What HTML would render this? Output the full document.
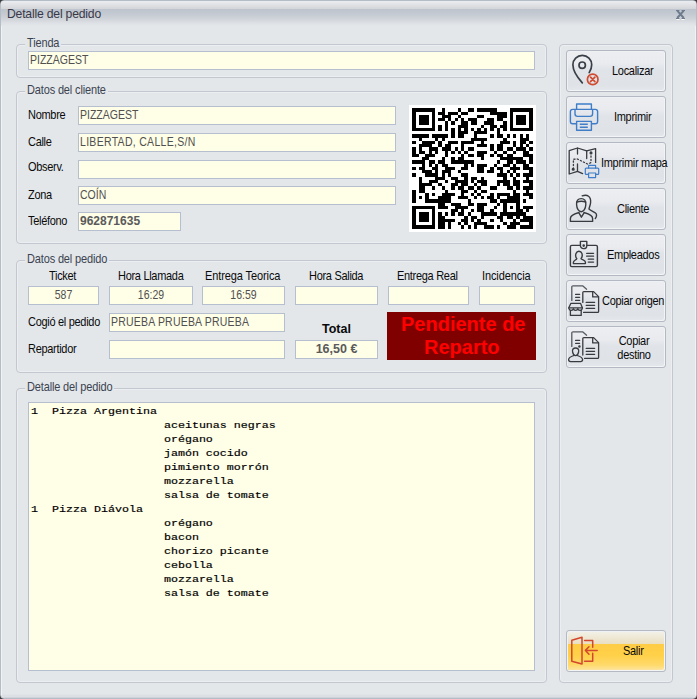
<!DOCTYPE html>
<html><head><meta charset="utf-8">
<style>
*{margin:0;padding:0;box-sizing:border-box}
html,body{width:697px;height:699px;overflow:hidden;background:#3a3a3a}
body{position:relative;font-family:"Liberation Sans",sans-serif;font-size:11px;color:#111}
.a{position:absolute}
#win{position:absolute;left:0;top:0;width:697px;height:699px;background:linear-gradient(#e3e7ea 693px,#e6e8ea 693px,#dcdfe3 694px,#dcdfe3 696px,#d0d4da 696px);border:1px solid #b4bcc6;border-radius:4px 4px 4px 4px;box-shadow:inset 1px 0 #f1f2f4,inset -1px 0 #f1f2f4}
#title{position:absolute;left:1px;top:1px;width:695px;height:25px;border-radius:3px 3px 0 0;
 background:linear-gradient(#ebecef 0px,#e6e7ea 2px,#d3d5d9 8px,#bdc4cd 8px,#c4cad2 13px,#d0d4da 18px,#dde0e4 22px,#e3e7ea 25px)}
.ttl{position:absolute;left:6px;top:7px;font-size:12.2px;letter-spacing:-0.2px;line-height:12px;color:#3a3848;white-space:nowrap}
.gb{position:absolute;border:1px solid #c3c8d0;border-radius:4px;box-shadow:inset 0 0 0 1px #eceef1}
.cap{position:absolute;font-size:11px;letter-spacing:-0.15px;transform:scaleY(1.08);transform-origin:0 10px;color:#3b4350;background:#e3e7ea;padding:0 2px 0 2px;white-space:nowrap;line-height:12px}
.lb{position:absolute;font-size:11px;letter-spacing:-0.3px;transform:scaleY(1.08);transform-origin:0 10px;color:#0a0a0a;white-space:nowrap;line-height:12px}
.in{position:absolute;background:#fffee7;border:1px solid #b5bfd0;height:19px}
.tx{position:absolute;font-size:10.5px;color:#505050;white-space:nowrap;line-height:12px;transform:scaleY(1.15);transform-origin:0 10px}
.btn{position:absolute;left:566px;width:100px;height:42px;border:1px solid #b3b8c2;border-radius:3px;box-shadow:inset -1px -1px #f3f4f6,inset 1px 1px #f0f1f4;
 background:linear-gradient(#eceef1 0px,#e9ebef 12px,#e0e3e8 19px,#dfe2e7 34px,#e4e7eb 40px)}
.bt{position:absolute;font-size:11px;letter-spacing:-0.3px;transform:scaleY(1.08);transform-origin:0 10px;color:#0a0a0a;white-space:nowrap;line-height:12px}
svg{position:absolute;overflow:visible}
.memo div{position:absolute;left:31px;white-space:pre;font-family:"Liberation Mono",monospace;font-size:11.667px;line-height:14px;height:14px;color:#000;-webkit-text-stroke:0.2px #000;transform:scaleY(0.85);transform-origin:0 10px}
</style></head><body>
<div id="win"></div>
<div id="title"><div class="ttl">Detalle del pedido</div></div>
<svg style="left:675px;top:9px" width="11" height="11" viewBox="0 0 11 11">
 <path d="M1.5 10.5h3M6.5 10.5h3" stroke="#fff" stroke-width="1" opacity=".9"/>
 <path d="M2.2 1.6L8.8 9M8.8 1.6L2.2 9" stroke="#6f7c8d" stroke-width="2"/>
 <path d="M1 1.5h3.4M6.6 1.5h3.4M1 9.5h3.4M6.6 9.5h3.4" stroke="#6f7c8d" stroke-width="1.1"/>
</svg>

<!-- Tienda -->
<div class="gb" style="left:16px;top:44px;width:531px;height:34px"></div>
<div class="cap" style="left:25px;top:37px">Tienda</div>
<div class="in" style="left:28px;top:51px;width:507px"></div>
<div class="tx" style="left:30px;top:54px">PIZZAGEST</div>

<!-- Datos del cliente -->
<div class="gb" style="left:16px;top:91px;width:531px;height:153px"></div>
<div class="cap" style="left:25px;top:84px">Datos del cliente</div>
<div class="lb" style="left:28px;top:109px">Nombre</div>
<div class="in" style="left:78px;top:106px;width:318px"></div>
<div class="tx" style="left:80px;top:109px">PIZZAGEST</div>
<div class="lb" style="left:28px;top:136px">Calle</div>
<div class="in" style="left:78px;top:133px;width:318px"></div>
<div class="tx" style="left:80px;top:136px;letter-spacing:0.3px">LIBERTAD, CALLE,S/N</div>
<div class="lb" style="left:28px;top:161px">Observ.</div>
<div class="in" style="left:78px;top:160px;width:318px"></div>
<div class="lb" style="left:28px;top:189px">Zona</div>
<div class="in" style="left:78px;top:186px;width:318px"></div>
<div class="tx" style="left:80px;top:189px">COÍN</div>
<div class="lb" style="left:28px;top:215px">Teléfono</div>
<div class="in" style="left:78px;top:212px;width:103px"></div>
<div class="tx" style="left:80px;top:215px;font-weight:bold;font-size:12px;color:#5a5a5a;transform:none">962871635</div>
<div class="a" style="left:409px;top:105px;width:127px;height:127px;background:#fff"></div>
<svg id="qr" style="left:412px;top:108px" width="121" height="121" viewBox="0 0 121 121" shape-rendering="crispEdges"><path d="M0 0H23V4H0zM30 0H33V4H30zM46 0H49V4H46zM56 0H62V4H56zM65 0H85V4H65zM98 0H121V4H98zM0 4H4V7H0zM20 4H23V7H20zM26 4H33V7H26zM36 4H46V7H36zM49 4H56V7H49zM78 4H95V7H78zM98 4H101V7H98zM117 4H121V7H117zM0 7H4V10H0zM7 7H17V10H7zM20 7H23V10H20zM30 7H39V10H30zM46 7H49V10H46zM65 7H72V10H65zM85 7H95V10H85zM98 7H101V10H98zM104 7H114V10H104zM117 7H121V10H117zM0 10H4V13H0zM7 10H17V13H7zM20 10H23V13H20zM26 10H33V13H26zM36 10H39V13H36zM43 10H46V13H43zM49 10H52V13H49zM56 10H65V13H56zM75 10H82V13H75zM85 10H91V13H85zM98 10H101V13H98zM104 10H114V13H104zM117 10H121V13H117zM0 13H4V17H0zM7 13H17V17H7zM20 13H23V17H20zM33 13H36V17H33zM39 13H43V17H39zM49 13H56V17H49zM59 13H65V17H59zM72 13H82V17H72zM91 13H95V17H91zM98 13H101V17H98zM104 13H114V17H104zM117 13H121V17H117zM0 17H4V20H0zM20 17H23V20H20zM26 17H30V20H26zM33 17H36V20H33zM46 17H56V20H46zM69 17H72V20H69zM78 17H85V20H78zM88 17H95V20H88zM98 17H101V20H98zM117 17H121V20H117zM0 20H23V23H0zM26 20H30V23H26zM33 20H36V23H33zM39 20H43V23H39zM46 20H49V23H46zM52 20H56V23H52zM59 20H62V23H59zM65 20H69V23H65zM72 20H75V23H72zM78 20H82V23H78zM85 20H88V23H85zM91 20H95V23H91zM98 20H121V23H98zM39 23H43V26H39zM46 23H56V26H46zM62 23H75V26H62zM85 23H88V26H85zM0 26H17V30H0zM20 26H36V30H20zM39 26H43V30H39zM46 26H52V30H46zM62 26H65V30H62zM78 26H82V30H78zM85 26H91V30H85zM95 26H98V30H95zM101 26H104V30H101zM108 26H111V30H108zM114 26H117V30H114zM7 30H10V33H7zM23 30H26V33H23zM30 30H33V33H30zM59 30H75V33H59zM91 30H95V33H91zM108 30H117V33H108zM0 33H4V36H0zM10 33H23V36H10zM26 33H30V36H26zM36 33H46V36H36zM49 33H62V36H49zM69 33H72V36H69zM88 33H98V36H88zM101 33H104V36H101zM108 33H114V36H108zM117 33H121V36H117zM7 36H20V39H7zM26 36H30V39H26zM33 36H39V39H33zM49 36H52V39H49zM65 36H75V39H65zM78 36H82V39H78zM85 36H91V39H85zM101 36H104V39H101zM108 36H111V39H108zM114 36H117V39H114zM0 39H4V43H0zM7 39H10V43H7zM17 39H26V43H17zM30 39H39V43H30zM43 39H46V43H43zM49 39H52V43H49zM56 39H62V43H56zM78 39H82V43H78zM85 39H91V43H85zM95 39H101V43H95zM104 39H114V43H104zM117 39H121V43H117zM0 43H4V46H0zM7 43H13V46H7zM17 43H20V46H17zM23 43H26V46H23zM33 43H36V46H33zM39 43H43V46H39zM46 43H49V46H46zM52 43H56V46H52zM65 43H75V46H65zM82 43H85V46H82zM91 43H95V46H91zM101 43H104V46H101zM111 43H117V46H111zM0 46H7V49H0zM13 46H23V49H13zM33 46H36V49H33zM49 46H52V49H49zM56 46H62V49H56zM65 46H72V49H65zM78 46H82V49H78zM85 46H91V49H85zM95 46H101V49H95zM111 46H121V49H111zM10 49H17V52H10zM30 49H33V52H30zM39 49H43V52H39zM46 49H52V52H46zM69 49H72V52H69zM88 49H111V52H88zM117 49H121V52H117zM0 52H13V56H0zM17 52H23V56H17zM26 52H33V56H26zM39 52H62V56H39zM85 52H88V56H85zM95 52H101V56H95zM104 52H114V56H104zM117 52H121V56H117zM10 56H13V59H10zM17 56H20V59H17zM23 56H26V59H23zM30 56H36V59H30zM52 56H56V59H52zM59 56H62V59H59zM65 56H75V59H65zM82 56H85V59H82zM91 56H98V59H91zM101 56H104V59H101zM111 56H117V59H111zM0 59H4V62H0zM7 59H13V62H7zM20 59H26V62H20zM33 59H43V62H33zM49 59H56V62H49zM65 59H72V62H65zM78 59H82V62H78zM85 59H91V62H85zM98 59H108V62H98zM111 59H121V62H111zM10 62H20V65H10zM23 62H26V65H23zM30 62H39V65H30zM46 62H49V65H46zM65 62H72V65H65zM75 62H82V65H75zM88 62H91V65H88zM95 62H98V65H95zM101 62H104V65H101zM117 62H121V65H117zM0 65H4V69H0zM13 65H26V69H13zM30 65H33V69H30zM36 65H39V69H36zM49 65H56V69H49zM85 65H95V69H85zM98 65H101V69H98zM104 65H108V69H104zM111 65H121V69H111zM7 69H10V72H7zM23 69H33V72H23zM39 69H46V72H39zM52 69H56V72H52zM59 69H65V72H59zM69 69H72V72H69zM91 69H95V72H91zM101 69H104V72H101zM114 69H117V72H114zM7 72H10V75H7zM17 72H26V75H17zM33 72H36V75H33zM43 72H56V75H43zM59 72H62V75H59zM65 72H75V75H65zM85 72H98V75H85zM101 72H108V75H101zM111 72H121V75H111zM7 75H20V78H7zM26 75H30V78H26zM39 75H46V78H39zM49 75H56V78H49zM62 75H65V78H62zM69 75H75V78H69zM85 75H88V78H85zM91 75H98V78H91zM101 75H108V78H101zM117 75H121V78H117zM7 78H13V82H7zM20 78H23V82H20zM30 78H33V82H30zM39 78H43V82H39zM46 78H52V82H46zM56 78H62V82H56zM65 78H69V82H65zM78 78H85V82H78zM95 78H101V82H95zM104 78H108V82H104zM111 78H121V82H111zM0 82H4V85H0zM7 82H13V85H7zM33 82H36V85H33zM49 82H56V85H49zM62 82H65V85H62zM69 82H75V85H69zM101 82H104V85H101zM114 82H117V85H114zM0 85H4V88H0zM13 85H17V88H13zM20 85H23V88H20zM30 85H43V88H30zM49 85H52V88H49zM59 85H62V88H59zM65 85H69V88H65zM78 85H82V88H78zM85 85H98V88H85zM101 85H108V88H101zM111 85H121V88H111zM0 88H4V91H0zM7 88H10V91H7zM13 88H17V91H13zM26 88H39V91H26zM46 88H56V91H46zM62 88H65V91H62zM69 88H72V91H69zM75 88H82V91H75zM85 88H88V91H85zM95 88H108V91H95zM117 88H121V91H117zM0 91H4V95H0zM13 91H39V95H13zM56 91H59V95H56zM78 91H85V95H78zM88 91H108V95H88zM111 91H114V95H111zM26 95H33V98H26zM39 95H49V98H39zM56 95H62V98H56zM65 95H75V98H65zM85 95H88V98H85zM91 95H95V98H91zM104 95H108V98H104zM0 98H23V101H0zM26 98H36V101H26zM43 98H56V101H43zM65 98H72V101H65zM82 98H85V101H82zM91 98H95V101H91zM98 98H101V101H98zM104 98H108V101H104zM111 98H121V101H111zM0 101H4V104H0zM20 101H23V104H20zM39 101H46V104H39zM49 101H52V104H49zM59 101H62V104H59zM65 101H72V104H65zM78 101H82V104H78zM91 101H95V104H91zM104 101H111V104H104zM114 101H117V104H114zM0 104H4V108H0zM7 104H17V108H7zM20 104H23V108H20zM26 104H30V108H26zM33 104H36V108H33zM39 104H43V108H39zM46 104H52V108H46zM56 104H59V108H56zM69 104H85V108H69zM88 104H114V108H88zM0 108H4V111H0zM7 108H17V111H7zM20 108H23V111H20zM26 108H33V111H26zM52 108H56V111H52zM59 108H65V111H59zM69 108H72V111H69zM85 108H91V111H85zM95 108H101V111H95zM104 108H108V111H104zM111 108H121V111H111zM0 111H4V114H0zM7 111H17V114H7zM20 111H23V114H20zM26 111H43V114H26zM49 111H56V114H49zM59 111H62V114H59zM65 111H69V114H65zM78 111H82V114H78zM88 111H91V114H88zM101 111H104V114H101zM108 111H121V114H108zM0 114H4V117H0zM20 114H23V117H20zM26 114H33V117H26zM36 114H39V117H36zM46 114H49V117H46zM52 114H56V117H52zM62 114H75V117H62zM91 114H95V117H91zM98 114H108V117H98zM117 114H121V117H117zM0 117H23V121H0zM26 117H33V121H26zM36 117H39V121H36zM49 117H52V121H49zM56 117H59V121H56zM62 117H65V121H62zM72 117H82V121H72zM85 117H88V121H85zM95 117H104V121H95zM108 117H121V121H108z" fill="#000"/></svg>

<!-- Datos del pedido -->
<div class="gb" style="left:16px;top:260px;width:531px;height:113px"></div>
<div class="cap" style="left:25px;top:253px">Datos del pedido</div>
<div class="lb" style="left:49px;top:270px">Ticket</div>
<div class="in" style="left:28px;top:286px;width:71px"></div>
<div class="tx" style="left:28px;top:289px;width:71px;text-align:center">587</div>
<div class="lb" style="left:118px;top:270px">Hora Llamada</div>
<div class="in" style="left:109px;top:286px;width:84px"></div>
<div class="tx" style="left:109px;top:289px;width:84px;text-align:center">16:29</div>
<div class="lb" style="left:205px;top:270px;letter-spacing:-0.1px">Entrega Teorica</div>
<div class="in" style="left:202px;top:286px;width:83px"></div>
<div class="tx" style="left:202px;top:289px;width:83px;text-align:center">16:59</div>
<div class="lb" style="left:309px;top:270px">Hora Salida</div>
<div class="in" style="left:295px;top:286px;width:83px"></div>
<div class="lb" style="left:397px;top:270px">Entrega Real</div>
<div class="in" style="left:388px;top:286px;width:81px"></div>
<div class="lb" style="left:482px;top:270px;letter-spacing:-0.1px">Incidencia</div>
<div class="in" style="left:479px;top:286px;width:56px"></div>
<div class="lb" style="left:28px;top:316px">Cogió el pedido</div>
<div class="in" style="left:109px;top:313px;width:176px"></div>
<div class="tx" style="left:111px;top:316px;letter-spacing:0.2px">PRUEBA PRUEBA PRUEBA</div>
<div class="lb" style="left:28px;top:343px">Repartidor</div>
<div class="in" style="left:109px;top:340px;width:176px"></div>
<div class="lb" style="left:322px;top:323px;font-weight:bold;font-size:12.5px;transform:none;letter-spacing:0">Total</div>
<div class="in" style="left:295px;top:340px;width:83px"></div>
<div class="tx" style="left:295px;top:343px;width:83px;text-align:center;font-weight:bold;font-size:12.5px;color:#5a5a5a;transform:none">16,50 €</div>
<div class="a" style="left:387px;top:312px;width:149px;height:48px;background:#800000"></div>
<div class="a" style="left:401px;top:313px;font-weight:bold;font-size:20px;line-height:23px;color:#ff0000;white-space:nowrap">Pendiente de</div>
<div class="a" style="left:424px;top:336px;font-weight:bold;font-size:20px;line-height:23px;color:#ff0000;white-space:nowrap">Reparto</div>

<!-- Detalle del pedido -->
<div class="gb" style="left:16px;top:388px;width:531px;height:295px"></div>
<div class="cap" style="left:25px;top:381px">Detalle del pedido</div>
<div class="in" style="left:28px;top:402px;width:507px;height:269px"></div>
<div class="memo"><div style="top:404px">1  Pizza Argentina</div>
<div style="top:418px">                   aceitunas negras</div>
<div style="top:432px">                   orégano</div>
<div style="top:446px">                   jamón cocido</div>
<div style="top:460px">                   pimiento morrón</div>
<div style="top:474px">                   mozzarella</div>
<div style="top:488px">                   salsa de tomate</div>
<div style="top:502px">1  Pizza Diávola</div>
<div style="top:516px">                   orégano</div>
<div style="top:530px">                   bacon</div>
<div style="top:544px">                   chorizo picante</div>
<div style="top:558px">                   cebolla</div>
<div style="top:572px">                   mozzarella</div>
<div style="top:586px">                   salsa de tomate</div>
</div>

<!-- Right panel -->
<div class="gb" style="left:559px;top:44px;width:114px;height:639px"></div>

<div class="btn" style="top:50px"></div>
<svg style="left:566px;top:50px" width="40" height="40" viewBox="0 0 40 40" fill="none" stroke-linecap="round">
 <path d="M23.2 22.6C24.8 20.2 25.7 17.6 25.7 14.8A9.4 9.4 0 0 0 6.9 14.8C6.9 21 10.5 26.5 16.3 32.8" stroke="#3a3f47" stroke-width="1.7"/>
 <circle cx="16.2" cy="15.2" r="3.2" stroke="#3a3f47" stroke-width="1.7"/>
 <circle cx="26.7" cy="29.4" r="5.3" stroke="#cf4a30" stroke-width="1.7"/>
 <path d="M24.5 27.2L28.9 31.6M28.9 27.2L24.5 31.6" stroke="#cf4a30" stroke-width="1.7"/>
</svg>
<div class="bt" style="left:612px;top:65px">Localizar</div>

<div class="btn" style="top:96px"></div>
<svg style="left:566px;top:96px" width="40" height="40" viewBox="0 0 40 40" fill="none" stroke="#3f7dc8" stroke-width="1.4" stroke-linejoin="round">
 <path d="M10.6 13.2V8h14.8v5.2"/>
 <path d="M10.2 27.8H6.6A2.2 2.2 0 0 1 4.4 25.6V15.6A2.2 2.2 0 0 1 6.6 13.4H29.4A2.2 2.2 0 0 1 31.6 15.6V25.6A2.2 2.2 0 0 1 29.4 27.8H25.8"/>
 <path d="M9 13.6V17.8A2.6 2.6 0 0 0 11.6 20.4H24A2.6 2.6 0 0 0 26.6 17.8V13.6"/>
 <rect x="10.6" y="25.4" width="14.8" height="8.8"/>
 <path d="M13.8 28.3H21.8M13.8 31.3H21.8"/>
</svg>
<div class="bt" style="left:614px;top:111px">Imprimir</div>

<div class="btn" style="top:142px"></div>
<svg style="left:566px;top:142px" width="40" height="40" viewBox="0 0 40 40" fill="none" stroke="#383b40" stroke-width="1.3" stroke-linejoin="round" stroke-linecap="round">
 <path d="M29.6 20.4V6.6L20.7 8.8L11.5 6L3.2 8.6V32L11.5 29.3L16.6 31.6"/>
 <path d="M11.5 6.2V12M11.5 22V29.2M20.7 8.8V16.6"/>
 <path d="M7.4 27V17.3L11.4 17L17 19.8L21.5 22" stroke-dasharray="1.2 2.2"/>
 <path d="M25 14V20.5L23.2 21.6" stroke-dasharray="1.2 2.2"/>
 <circle cx="25" cy="10.9" r="0.9" fill="#383b40"/>
 <circle cx="7.2" cy="27.2" r="0.9" fill="#383b40"/>
 <g stroke="#3f7dc8" stroke-width="1.2">
  <path d="M22.6 26.1V23.4H29.6V26.1"/>
  <path d="M22.2 32.3H20.2A0.9 0.9 0 0 1 19.3 31.4V27A0.9 0.9 0 0 1 20.2 26.1H31.8A0.9 0.9 0 0 1 32.7 27V31.4A0.9 0.9 0 0 1 31.8 32.3H30"/>
  <rect x="22.6" y="31" width="7" height="4.6"/>
 </g>
</svg>
<div class="bt" style="left:601px;top:157px">Imprimir mapa</div>

<div class="btn" style="top:188px"></div>
<svg style="left:566px;top:188px" width="40" height="40" viewBox="0 0 40 40" fill="none" stroke="#383b40" stroke-width="1.4" stroke-linejoin="round" stroke-linecap="round">
 <path d="M16.2 7.8C18.5 7 21 7 22.6 8.2C24.6 9.6 24.8 12 24.6 14.5C24.4 17 23.2 19.5 23 21C24.2 22.4 27.5 23.6 29.5 25C31 26.2 30.8 28.8 29.3 30.4"/>
 <path d="M10.6 16.8C10.2 12.8 12 10.6 15.2 10.6C18.4 10.6 20.2 12.8 19.8 16.8C19.6 20.4 17.8 23.8 15.2 23.8C12.6 23.8 10.8 20.4 10.6 16.8Z"/>
 <path d="M10.8 14.2C12.6 13.4 16.8 13 19.6 14"/>
 <path d="M12.8 24.6C9 25.6 4.6 26.6 4.4 30.4V33.4H26.6V30.4C26.4 26.6 22 25.6 18.2 24.6"/>
 <path d="M12.8 24.6L15.4 29.2L18.2 24.6"/>
</svg>
<div class="bt" style="left:617px;top:203px">Cliente</div>

<div class="btn" style="top:234px"></div>
<svg style="left:566px;top:234px" width="40" height="40" viewBox="0 0 40 40" fill="none" stroke="#383b40" stroke-width="1.4" stroke-linejoin="round" stroke-linecap="round">
 <rect x="4.4" y="11.4" width="27" height="21.2" rx="1.4"/>
 <path d="M14.4 11.4V7.4H20.8V11.4C20.8 13.2 19.4 14.6 17.6 14.6C15.8 14.6 14.4 13.2 14.4 11.4Z" fill="#e6e9ed"/>
 <circle cx="17.7" cy="11.6" r="0.6" fill="#383b40"/>
 <path d="M10.8 24.6C9.4 23 9.6 20.6 10 19.4C10.6 17.8 11.8 17.2 12.9 17.2C14 17.2 15.4 17.8 15.9 19.4C16.3 20.6 16.4 23 15 24.6C15.2 25.6 19.6 26.2 19.4 28.2V29.6H7.4V28.2C7.4 26.4 10.6 25.8 10.8 24.6Z"/>
 <path d="M20.6 19.3H27.6M20.6 22.2H27.6M22.2 25.2H27.6M22.2 28.1H27.6" stroke-width="1.2"/>
</svg>
<div class="bt" style="left:607px;top:249px">Empleados</div>

<div class="btn" style="top:280px"></div>
<svg style="left:566px;top:280px" width="40" height="40" viewBox="0 0 40 40" fill="none" stroke="#383b40" stroke-width="1.3" stroke-linejoin="round" stroke-linecap="round">
 <path d="M5.8 20.4V7A1.2 1.2 0 0 1 7 5.8H16.6L20.6 9.2" stroke="#555a60"/>
 <path d="M9.6 14.4H13.6M9.6 17.3H13.6M9.6 20.4H13.6"/>
 <path d="M16.8 22.4V12.6A1 1 0 0 1 17.8 11.6H27.6L32.6 16.6V31.4A1 1 0 0 1 31.6 32.4H17.6"/>
 <path d="M26.7 12V16.9H32.2"/>
 <path d="M20.2 22.4H28.6M20.2 25.3H28.6M20.2 28.4H28.6"/>
 <path d="M4.4 30.4V35.4H15.2V30.4"/>
 <path d="M4.8 23.4H14.6L16.4 27.8C16.4 29.4 15 30.4 14 30.4C13 30.4 11.8 29.6 11.8 28.6C11.8 29.6 10.6 30.4 9.6 30.4C8.6 30.4 7.4 29.6 7.4 28.6C7.4 29.6 6.2 30.4 5.2 30.4C4.2 30.4 2.8 29.4 2.8 27.8Z"/>
 <path d="M2.8 27.8H16.4"/>
</svg>
<div class="bt" style="left:602px;top:295px">Copiar origen</div>

<div class="btn" style="top:326px"></div>
<svg style="left:566px;top:326px" width="40" height="40" viewBox="0 0 40 40" fill="none" stroke="#383b40" stroke-width="1.3" stroke-linejoin="round" stroke-linecap="round">
 <path d="M5.8 20.4V7A1.2 1.2 0 0 1 7 5.8H16.6L20.6 9.2" stroke="#555a60"/>
 <path d="M9.6 14.4H13.6M9.6 17.3H13.6"/>
 <circle cx="13.4" cy="20.4" r="0.6" fill="#383b40"/>
 <path d="M16.8 29V12.6A1 1 0 0 1 17.8 11.6H27.6L32.6 16.6V31.4A1 1 0 0 1 31.6 32.4H18.6"/>
 <path d="M26.7 12V16.9H32.2"/>
 <path d="M20.2 22.4H28.6M20.2 25.3H28.6M20.2 28.4H28.6"/>
 <path d="M6.6 26C6 23.4 7.4 22 9.6 22C11.8 22 13.2 23.4 12.6 26C12.2 28 11.2 29.6 9.6 29.6C8 29.6 7 28 6.6 26Z"/>
 <path d="M7.6 29.6C5 30.6 2.6 31.4 2.6 33.6C2.6 35.2 3.6 35.6 4.6 35.6H14.6C15.6 35.6 16.6 35.2 16.6 33.6C16.6 31.4 14.2 30.6 11.6 29.6"/>
</svg>
<div class="bt" style="left:606px;top:335px;width:56px;text-align:center;line-height:13px">Copiar<br>destino</div>

<div class="btn" style="top:630px;border-color:#b5b9c2;background:linear-gradient(#f3f1ea 0px,#ede6d0 8px,#e9dfc2 13px,#ffcd45 13px,#ffd048 24px,#ffd96a 34px,#fbe9b4 41px)"></div>
<svg style="left:566px;top:630px" width="40" height="40" viewBox="0 0 40 40" fill="none" stroke="#d2472d" stroke-width="1.5" stroke-linejoin="round" stroke-linecap="round">
 <path d="M5.8 10.2L16 7.2V34L5.8 31.2Z"/>
 <path d="M18.6 10.4H26.7V17.2M26.7 23.2V31.2H18.6"/>
 <path d="M19.4 20.4H31.2M23 16.8L19.4 20.4L23 24.2"/>
</svg>
<div class="bt" style="left:623px;top:645px">Salir</div>
</body></html>
